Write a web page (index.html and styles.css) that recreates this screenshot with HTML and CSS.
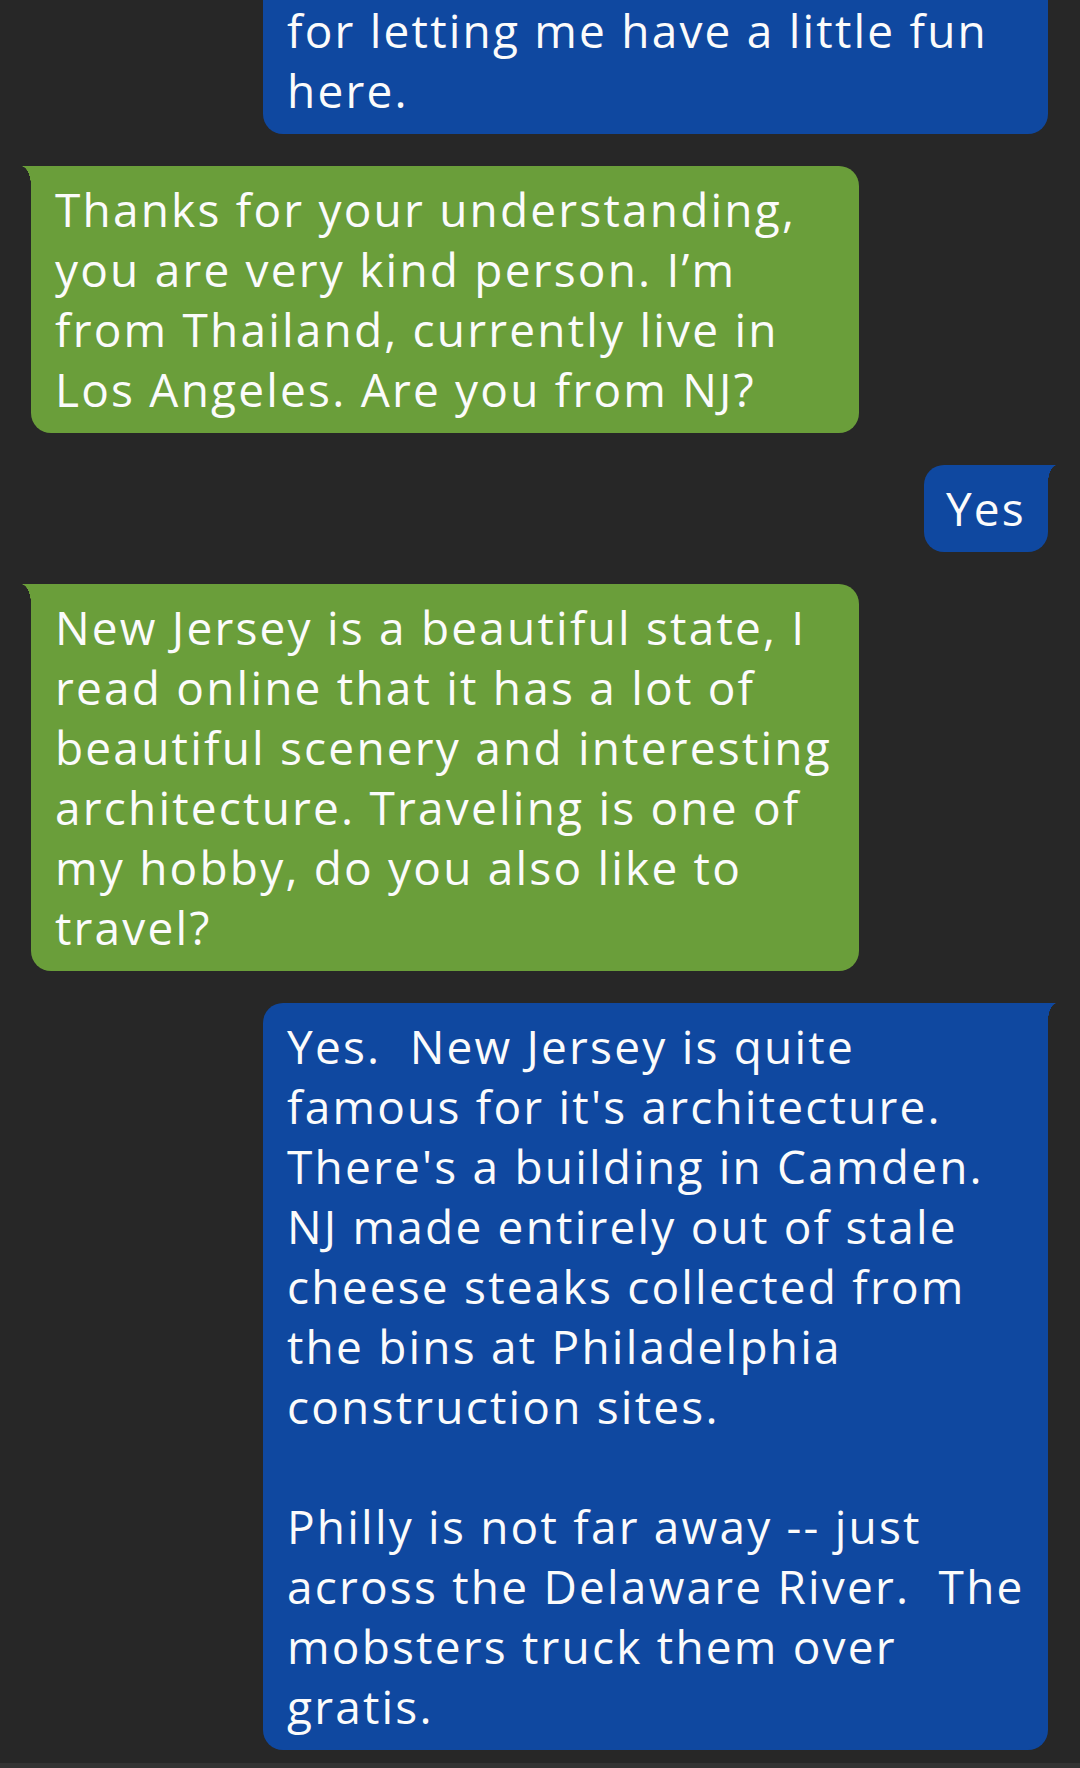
FILE: index.html
```html
<!DOCTYPE html>
<html lang="en">
<head>
<meta charset="utf-8">
<title>Messages</title>
<link rel="stylesheet" href="styles.css">
</head>
<body>
<main class="thread">
  <div class="bubble sent wide cut">for letting me have a little fun<br>here.</div>
  <div class="bubble received">Thanks for your understanding,<br>you are very kind person. I’m<br>from Thailand, currently live in<br>Los Angeles. Are you from NJ?</div>
  <div class="bubble sent">Yes</div>
  <div class="bubble received">New Jersey is a beautiful state, I<br>read online that it has a lot of<br>beautiful scenery and interesting<br>architecture. Traveling is one of<br>my hobby, do you also like to<br>travel?</div>
  <div class="bubble sent wide">Yes.&nbsp; New Jersey is quite<br>famous for it's architecture.<br>There's a building in Camden.<br>NJ made entirely out of stale<br>cheese steaks collected from<br>the bins at Philadelphia<br>construction sites.<br><br>Philly is not far away -- just<br>across the Delaware River.&nbsp; The<br>mobsters truck them over<br>gratis.</div>
</main>
<div class="composer-edge"></div>
</body>
</html>
```
FILE: styles.css
```css
html, body {
  margin: 0;
  padding: 0;
}
body {
  width: 1080px;
  height: 1768px;
  overflow: hidden;
  background: #272727;
  display: flex;
  flex-direction: column;
  font-family: "Open Sans", "Liberation Sans", sans-serif;
}
.thread {
  display: flex;
  flex-direction: column;
  gap: 32.5px;
  padding: 0 32px 0 31px;
}
.bubble {
  position: relative;
  box-sizing: border-box;
  padding: 13px 24px 13.5px 24px;
  border-radius: 20px;
  color: #fbfbfb;
  font-size: 46px;
  line-height: 60px;
  letter-spacing: 2.2px;
  white-space: nowrap;
}
.received {
  align-self: flex-start;
  width: 828px;
  background: #6a9e3a;
  border-top-left-radius: 0;
}
.received::before {
  content: "";
  position: absolute;
  left: -10px;
  top: 0;
  width: 10px;
  height: 20px;
  background: radial-gradient(10px 20px at 0 100%, transparent 98%, #6a9e3a 100%);
}
.sent {
  align-self: flex-end;
  background: #0f48a0;
  border-top-right-radius: 0;
}
.sent::after {
  content: "";
  position: absolute;
  right: -9px;
  top: 0;
  width: 9px;
  height: 18px;
  background: radial-gradient(9px 18px at 100% 100%, transparent 98%, #0f48a0 100%);
}
.sent.wide {
  width: 785px;
}
.sent:not(.wide) {
  padding-left: 22px;
  padding-right: 22px;
}
.cut {
  margin-top: -40px;
  padding-top: 40px;
}
.composer-edge {
  margin-top: auto;
  height: 5px;
  background: #333333;
}
```
